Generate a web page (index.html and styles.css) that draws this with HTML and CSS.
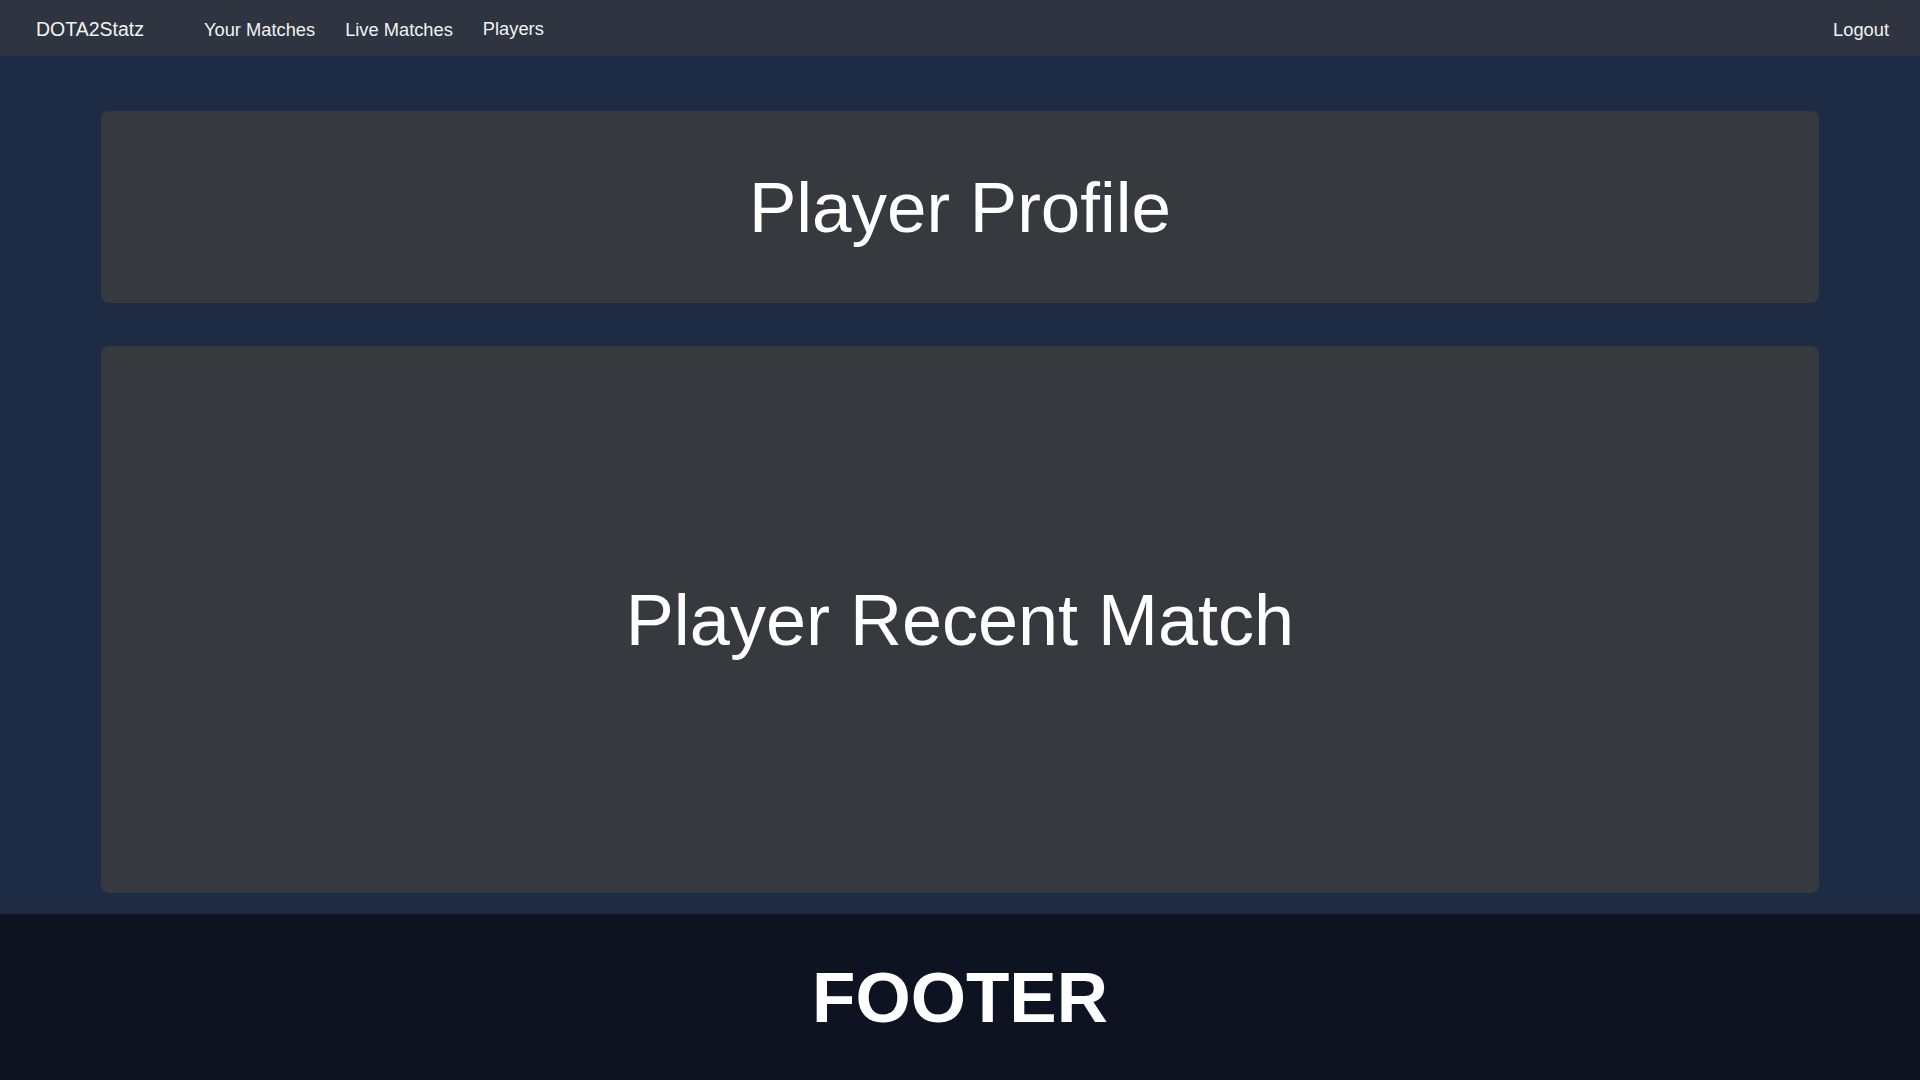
FILE: index.html
```html
<!DOCTYPE html>
<html lang="en">
<head>
  <meta charset="UTF-8">
  <meta name="viewport" content="width=device-width, initial-scale=1.0">
  <title>DOTA2Statz - Player</title>
  <link rel="stylesheet" href="styles.css">
</head>
<body>

  <nav class="navbar">
    <a class="brand" href="#">DOTA2Statz</a>
    <ul class="nav-links">
      <li><a href="#">Your Matches</a></li>
      <li><a href="#">Live Matches</a></li>
      <li><a href="#" class="players">Players</a></li>
    </ul>
    <a class="logout" href="#">Logout</a>
  </nav>

  <main class="content">
    <section class="card card-profile">
      <h1>Player Profile</h1>
    </section>
    <section class="card card-match">
      <h1>Player Recent Match</h1>
    </section>
  </main>

  <footer class="footer">
    <h2>FOOTER</h2>
  </footer>

</body>
</html>
```

FILE: styles.css
```css
body {
  font-family: "Liberation Sans", Arial, sans-serif;
  margin: 0;
  min-height: 100vh;
  display: flex;
  flex-direction: column;
  background: #1e2b45;
  color: #fff;
}
a {
  color: #f2f2f2;
  text-decoration: none;
}
.navbar {
  display: flex;
  align-items: center;
  height: 56px;
  box-sizing: border-box;
  padding: 3px 31px 0 36px;
  background: #2e3440;
}
.brand {
  font-size: 19.5px;
  margin-right: 60px;
}
.nav-links {
  display: flex;
  gap: 30px;
  list-style: none;
  margin: 0;
  padding: 0;
  flex: 1;
}
.nav-links a,
.logout {
  font-size: 18.3px;
}
.nav-links .players {
  position: relative;
  top: -1px;
}
.content {
  flex: 1;
  display: flex;
  flex-direction: column;
  gap: 43px;
  padding: 55px 101px 21px;
}
.card {
  background: #36393d;
  border-radius: 8px;
  display: flex;
  align-items: center;
  justify-content: center;
}
.card h1 {
  margin: 0;
  font-size: 72px;
  font-weight: normal;
}
.card-profile {
  height: 192px;
}
.card-profile h1 {
  font-size: 71px;
}
.card-match {
  height: 547px;
}
.footer {
  height: 166px;
  background: #0e1321;
  display: flex;
  align-items: center;
  justify-content: center;
}
.footer h2 {
  margin: 0;
  font-size: 71px;
  font-weight: bold;
}
```
